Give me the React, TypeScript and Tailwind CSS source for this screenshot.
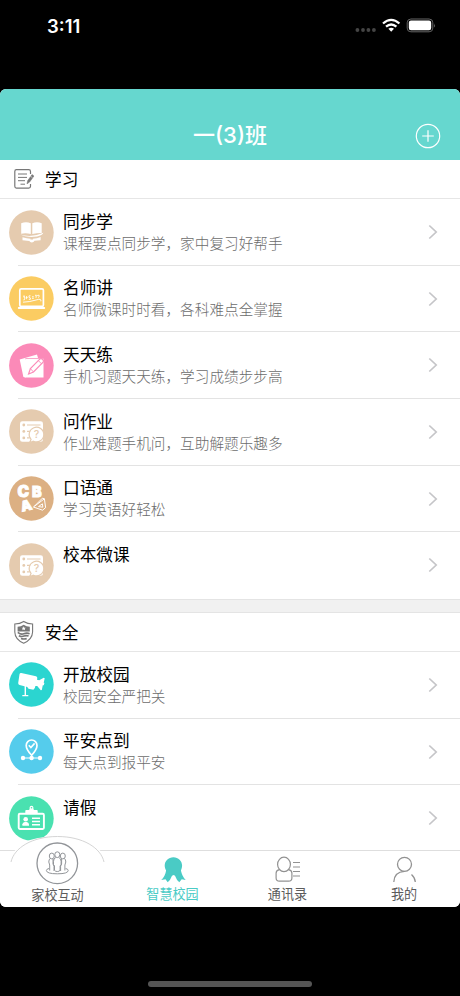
import React from 'react';

type Kind = 'book' | 'laptop' | 'pencil' | 'list' | 'abc' | 'camera' | 'pin' | 'badge';
type Item = { title: string; sub?: string; kind: Kind; color: string };

const study: Item[] = [
  { title: '同步学', sub: '课程要点同步学，家中复习好帮手', kind: 'book', color: '#e5cbaf' },
  { title: '名师讲', sub: '名师微课时时看，各科难点全掌握', kind: 'laptop', color: '#fbcc62' },
  { title: '天天练', sub: '手机习题天天练，学习成绩步步高', kind: 'pencil', color: '#fb8ab8' },
  { title: '问作业', sub: '作业难题手机问，互助解题乐趣多', kind: 'list', color: '#e5cbaf' },
  { title: '口语通', sub: '学习英语好轻松', kind: 'abc', color: '#dcb083' },
  { title: '校本微课', kind: 'list', color: '#e5cbaf' },
];

const safety: Item[] = [
  { title: '开放校园', sub: '校园安全严把关', kind: 'camera', color: '#2bd5d0' },
  { title: '平安点到', sub: '每天点到报平安', kind: 'pin', color: '#55ccec' },
  { title: '请假', kind: 'badge', color: '#4ae1b0' },
];

function Glyph({ kind, color }: { kind: Kind; color: string }) {
  switch (kind) {
    case 'book':
      return (
        <g fill="#fff">
          <path d="M12.2 13.2Q17 11.3 21.8 13.2V24Q17 22.9 12.2 23.7Z" />
          <path d="M23.3 13.2Q28 11.3 32.7 13.2V23.1Q28 23 23.3 24Z" />
          <path d="M11 24.6Q23 28 34.4 22.8Q33.5 25.4 28 26.5Q18 28 11 24.6Z" />
          <path d="M13.5 27.3Q18 28.5 21.5 28.8V29.6H24V28.8Q28 28.5 31.6 27V30.2L25.5 30.8Q24.7 32.4 22.8 32.4Q21 32.4 20.3 31L13.5 30.2Z" />
        </g>
      );
    case 'laptop':
      return (
        <g fill="none" stroke="#fff">
          <rect x="10.8" y="12.9" width="23.6" height="17.4" rx="1.4" strokeWidth="1.7" />
          <path d="M9.8 32H35.2" strokeWidth="2" strokeLinecap="round" />
          <path d="M14 20.3l1.5-.4-.5 1.7 1 .2-.6 2-1 .1M17.6 20v3.2M16.8 21.5h1.8M20 19.8h1.5M20 19.8v1.7q2 0 1.4 1.8l-1.6.1M23 20.8h1.8M23 22.3h1.8M26 19.4l1.3-.3-.3 2.7M28.2 19.6l1.8-.4q.7 1.8-.8 2.3M14 26.2q7-.3 13-2.2t4.8 1.3" strokeWidth=".9" />
        </g>
      );
    case 'pencil':
      return (
        <g>
          <path d="M10.7 16.4 28 11.6l1 3.4H16.5V34.5L14.4 34Z" fill="#fff" />
          <path d="M17 15.7H34.5V34.6H15.8V17Z" fill="#fff" />
          <path d="M19.6 31l1.8-5.4L31 15.9q1.4-.8 2.8.6 1.2 1.4.3 2.7L24.5 29Z" fill="#fff" stroke={color} strokeWidth="1.2" />
          <path d="M21.4 25.6l3.1 3.4M29.3 17.6l3.2 3.2" fill="none" stroke={color} strokeWidth=".9" />
        </g>
      );
    case 'list':
      return (
        <g>
          <rect x="11" y="12.2" width="23" height="20.6" rx="2.4" fill="#fff" />
          <g fill={color}>
            <circle cx="14.8" cy="16" r="1.4" />
            <circle cx="14.8" cy="22.4" r="1.4" />
            <circle cx="14.8" cy="28.9" r="1.4" />
          </g>
          <path d="M18 16H31.5M18 22.4H21M18 28.9H20.5" stroke={color} strokeWidth="1.2" />
          <path d="M20.5 33.6l1.6-3.1a7.3 7.3 0 1 1 2.4 1.7Z" fill="#fff" stroke={color} strokeWidth="1.1" />
          <text x="27.6" y="29.2" textAnchor="middle" fill={color} fontSize="10.5" fontWeight="500" fontFamily="Inter, sans-serif">?</text>
        </g>
      );
    case 'abc':
      return (
        <g fill="#fff" stroke="#fff" strokeWidth=".9" fontFamily="Inter, sans-serif" fontWeight="900" fontSize="15.5">
          <text x="8.4" y="21.2">C</text>
          <text x="23" y="20.8" fontSize="14.4">B</text>
          <text x="11.6" y="34.6" fontSize="14" transform="rotate(-14 17 29)">A</text>
          <path d="M24.4 31 35.4 22.8 36.6 31.6 33.6 34.2Z M29.5 30.6l3.9-2.8.4 3.4Z" fill="none" strokeWidth="1" />
          <path d="M25.6 30 33.4 22.2l2 .6" fill="none" strokeWidth="1" />
        </g>
      );
    case 'camera':
      return (
        <g fill="#fff">
          <path d="M12.3 10.9 27 14.3q1.4.4 1.3 1.7l-.3 1.7 2.2.6 4.5-2.6 1 .6-1 4.4.7.3-.6 2.2-1 .1-1 4.6-1 .3-3.6-4.2-1.8-.1-.5 1.8q-.4 1.2-1.7.9L10.6 23Q9 22.5 9.2 21l1.3-8.8q.3-1.5 1.8-1.3Z" />
          <path d="M15.6 23h1.4v10h2.3v1.2h-6v-1.2h2.3Z" />
          <path d="M18 24.6l7.5 1.2-1 2-5-1Z" />
        </g>
      );
    case 'pin':
      return (
        <g fill="none" stroke="#fff">
          <path d="M22.6 26.3Q17.2 20.3 17.2 16.4a5.4 5.4 0 0 1 10.8 0Q28 20.3 22.6 26.3Z" strokeWidth="1.7" />
          <path d="M19.8 16.2l2.1 2.3 3.7-4.1" strokeWidth="1.6" />
          <path d="M22.6 26v3M14 29H31" strokeWidth="1" />
          <g fill="#fff" stroke="none">
            <circle cx="14" cy="29" r="2.2" />
            <circle cx="22.6" cy="29" r="2.2" />
            <circle cx="31" cy="29" r="2.2" />
          </g>
        </g>
      );
    case 'badge':
      return (
        <g fill="#fff">
          <rect x="9.7" y="17.8" width="25.2" height="15.2" rx="1.2" fill="none" stroke="#fff" strokeWidth="1.9" />
          <path d="M16.3 18v-3.2q0-.9 1-.9h2.5q.7 0 .8-.8v-1.5a1.9 1.9 0 0 1 3.8 0v1.5q.1.8.8.8h2.5q1 0 1 .9V18Z" />
          <circle cx="22.5" cy="11.7" r=".8" fill={color} />
          <circle cx="16.7" cy="23.3" r="2.3" />
          <path d="M13.4 29.8v-1.5q.3-1.7 2.3-2.2h2q2 .5 2.3 2.2v1.5Z" />
          <path d="M23 22.3h8M23 25.5h8M23 28.8h8" stroke="#fff" strokeWidth="1.5" />
        </g>
      );
  }
}

function Row({ item, last }: { item: Item; last: boolean }) {
  return (
    <div className="flex h-[66.67px] shrink-0 flex-col pl-[9px]">
      <div className="flex flex-1 pr-[22px]">
        <svg className="mt-[10.5px] h-[45px] w-[45px] shrink-0" viewBox="0 0 45 45">
          <circle cx="22.4" cy="22.5" r="22.3" fill={item.color} />
          <Glyph kind={item.kind} color={item.color} />
        </svg>
        <div className="flex flex-1 flex-col pl-[9px] pt-[11.8px]">
          <div className="text-[16.67px] leading-[22px] text-black">{item.title}</div>
          {item.sub && <div className="text-[14.65px] font-light leading-[22px] text-[#6c6c6c]">{item.sub}</div>}
        </div>
        <svg className="mt-[25px] h-4 w-[10px]" viewBox="0 0 10 16" fill="none">
          <path d="M1.3 1.5 8.2 8l-6.9 6.5" stroke="#c5c5c8" strokeWidth="1.7" />
        </svg>
      </div>
      <div className={`ml-[9px] h-px ${last ? 'bg-transparent' : 'bg-[#e3e3e3]'}`} />
    </div>
  );
}

function SectionHead({ title, children }: { title: string; children: React.ReactNode }) {
  return (
    <div className="flex h-[39px] shrink-0 items-center border-b border-[#e6e6e6] pl-[13px]">
      <svg className="h-6 w-[22px]" viewBox="0 0 22 24" fill="none" stroke="#777" strokeWidth="1.2">
        {children}
      </svg>
      <span className="ml-[10px] pt-[2px] text-[16.67px] leading-6 text-black">{title}</span>
    </div>
  );
}

export default function App() {
  return (
    <div className="flex h-[996px] w-[460px] flex-col overflow-hidden bg-black font-['Inter','Noto_Sans_CJK_SC',sans-serif]">
      <div className="flex h-[89px] shrink-0 items-start justify-between pl-[47px] pr-[24px] pt-[14px]">
        <span className="text-[18.5px] font-semibold leading-6 text-white">3:11</span>
        <svg className="mt-1 h-[16px] w-[82px]" viewBox="0 0 82 16">
          <g fill="#454545">
            <circle cx="3.4" cy="12" r="1.9" />
            <circle cx="9" cy="12" r="1.9" />
            <circle cx="14.4" cy="12" r="1.9" />
            <circle cx="19.9" cy="12" r="1.9" />
          </g>
          <g fill="none" stroke="#fff" strokeWidth="2.3">
            <path d="M29 5.5Q37.2-1.7 45.4 5.5" />
            <path d="M32 8.7Q37.2 4.3 42.4 8.7" />
          </g>
          <path d="M34.4 10.8Q37.2 8.7 40 10.8L37.2 13.7Z" fill="#fff" />
          <rect x="53.2" y="1" width="25.6" height="12.8" rx="3.7" fill="none" stroke="#666" />
          <rect x="54.8" y="2.5" width="22.4" height="9.8" rx="2.2" fill="#fff" />
          <path d="M80 5.4q1.7 2 0 4Z" fill="#666" />
        </svg>
      </div>

      <div className="relative flex h-[818px] shrink-0 flex-col overflow-hidden rounded-[6px] bg-white">
        <div className="flex h-[71px] shrink-0 items-end justify-between bg-[#66d7cf] px-[19px] pb-[11px]">
          <div className="w-[26px]" />
          <h1 className="mb-[-2px] text-[22px] font-medium leading-[32px] text-white">一(3)班</h1>
          <svg className="h-[26px] w-[26px]" viewBox="0 0 26 26" fill="none" stroke="#fff" strokeWidth="1.2">
            <circle cx="13" cy="13" r="11.7" />
            <path d="M7.2 13h11.6M13 7.2v11.6" />
          </svg>
        </div>

        <div className="flex h-[690px] shrink-0 flex-col overflow-hidden">
          <SectionHead title="学习">
            <path d="M17.5 7V4.5q0-1.8-1.8-1.8H3.4q-1.6 0-1.6 1.8v14.8q0 1.8 1.6 1.8h12.3q1.8 0 1.8-1.8V17" />
            <path d="M5 7h9M5 10.4h9M5 13.7h7M7.5 17.2H12" strokeWidth="1" />
            <path d="M14 16.8l.8-3.2 4.2-6 1.9 1.4-4.3 6Z" fill="#777" strokeWidth=".6" />
            <path d="M17.2 9l2.1 1.5" stroke="#fff" strokeWidth=".6" />
          </SectionHead>
          {study.map((item, i) => (
            <Row key={item.title} item={item} last={i === study.length - 1} />
          ))}
          <div className="h-[14px] shrink-0 border-y border-[#e4e4e4] bg-[#f1f1f1]" />
          <SectionHead title="安全">
            <path d="M10.7 1.5Q14.5 4 19.6 4V12q-.3 7.5-8.9 11.2Q2 19.5 1.8 12V4Q7 4 10.7 1.5Z" strokeWidth="1.1" />
            <path d="M4.6 6.7q3.5-.1 6.1-1.9 2.6 1.8 6.1 1.9v4.8H4.6Z" fill="#777" stroke="none" />
            <path d="M10.7 6.3l.6 1.4 1.5.1-1.1 1 .4 1.4-1.4-.8-1.4.8.4-1.4-1.1-1 1.5-.1Z" fill="#fff" stroke="none" />
            <path d="M4.8 12.3q3 2.7 6 1.5t5.8-.1M5.8 15.7q2.8 1.3 5.2.4t4.6 0M8 18.4q2.5 1 5.7.2" strokeWidth="1.6" />
          </SectionHead>
          {safety.map((item, i) => (
            <Row key={item.title} item={item} last={i === safety.length - 1} />
          ))}
        </div>

        <nav className="relative grid h-[57px] shrink-0 grid-cols-4 border-t border-[#dedede] bg-white text-[13.1px] leading-[18px] text-[#5c5c5c]">
          <svg className="absolute left-[10px] top-[-16px] h-[44px] w-[96px]" viewBox="0 0 96 44">
            <path d="M1 27Q3 1.5 47.5 1.5T94 27V44H1Z" fill="#fff" />
            <path d="M1 27C4 13 22 1.5 47.5 1.5S91 13 94 27" fill="none" stroke="#d5d5d5" />
          </svg>
          <div className="relative flex flex-col items-center pt-[35px]">
            <svg className="absolute left-[36px] top-[-9px] h-[43px] w-[43px]" viewBox="0 0 43 43" fill="none" stroke="#929599">
              <circle cx="21.3" cy="21.3" r="20.3" strokeWidth="1.3" />
              <g strokeWidth="1">
                <ellipse cx="15.8" cy="14" rx="2.5" ry="2.9" />
                <ellipse cx="26.8" cy="14" rx="2.5" ry="2.9" />
                <path d="M14.2 16.4q-1.4 1.2-1.4 3.6l.9 3v5.5M28.4 16.4q1.4 1.2 1.4 3.6l-.9 3v5.5M17 17v5l1 2.2V29M25.6 17v5l-1 2.2V29" />
                <ellipse cx="21.3" cy="12.7" rx="2.5" ry="2.9" fill="#fff" />
                <path d="M19.8 15.5q-2.4 1-2.3 4v3l1 1.5v4.2q1 1.5 2.8 1.3 1.8.2 2.8-1.3V24l1-1.5v-3q.1-3-2.3-4" />
                <path d="M13 26.5q-2.6.5-2.6 2 .2 3.3 10.9 3.3t10.9-3.3q0-1.5-2.6-2" />
              </g>
            </svg>
            <span>家校互动</span>
          </div>
          <div className="flex flex-col items-center pt-[5px] text-[#4acbc5]">
            <svg className="h-[27px] w-[28px] shrink-0" viewBox="0 0 28 27" fill="currentColor">
              <path d="M14.4 1.2c5 0 8.7 3.6 8.7 8.4 0 1.8-.5 3.4-1.2 4.8.9 3.8 2.3 6.8 4.8 9.7l-4-.9-2.4 3q-2.6-1.8-4.3-6.5l-1.3-.8-1.7.8q-1.7 4.7-4.3 6.5l-2.2-3-4.2.9c2.6-2.9 4.2-5.9 4.8-9.7-.9-1.4-1.4-3-1.4-4.8 0-4.8 3.7-8.4 8.7-8.4Z" />
            </svg>
            <span className="mt-[2px]">智慧校园</span>
          </div>
          <div className="flex flex-col items-center pt-[5px]">
            <svg className="h-[27px] w-[27px] shrink-0" viewBox="0 0 27 27" fill="none" stroke="#929292" strokeWidth="1.2">
              <path d="M5.5 13.7Q2.2 14.2 2.1 17v5q.1 3.2 3.3 3.2h9.2q3.2 0 3.3-3.2v-5q-.1-2.8-3.4-3.3" />
              <ellipse cx="10" cy="8.4" rx="6.4" ry="7.2" />
              <path d="M19 6.5h7M19 11h7M19 15.5h7M19 20h7" />
            </svg>
            <span className="mt-[2px]">通讯录</span>
          </div>
          <div className="flex flex-col items-center pl-[3px] pt-[5px]">
            <svg className="h-[27px] w-[27px] shrink-0" viewBox="0 0 27 27" fill="none" stroke="#929292" strokeWidth="1.3">
              <circle cx="13.5" cy="8.3" r="7" />
              <path d="M2.8 26Q3.2 15.8 13.5 15.3M20.5 18.5q3.4 3 3.8 7.5" />
            </svg>
            <span className="mt-[2px]">我的</span>
          </div>
        </nav>
      </div>

      <div className="mt-[74px] ml-[148px] h-[6px] w-[164px] shrink-0 rounded-full bg-[#555]" />
    </div>
  );
}
